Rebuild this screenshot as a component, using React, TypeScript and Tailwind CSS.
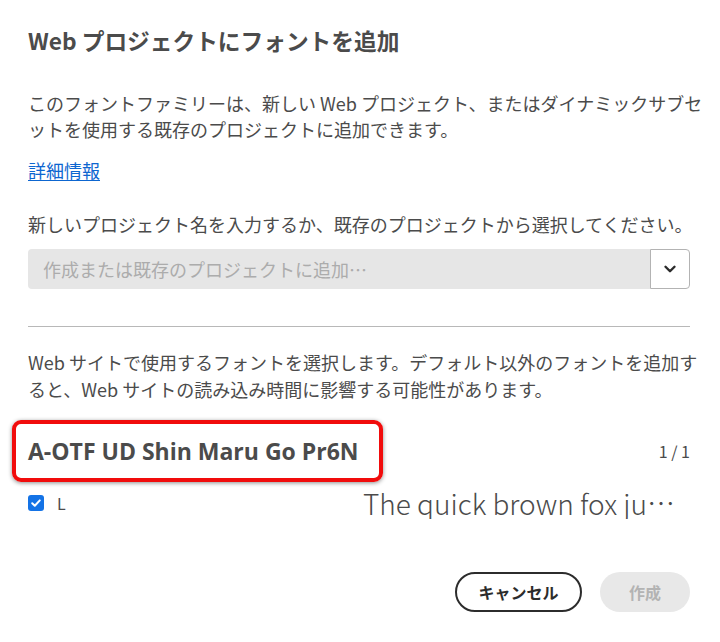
import React from "react";
import { ChevronDown } from "lucide-react";

export default function App() {
  const font = { fontFamily: '"Noto Sans CJK JP", "Noto Sans", sans-serif' } as React.CSSProperties;
  return (
    <div
      className="w-[720px] h-[642px] bg-white pl-[28px] pr-[30px] text-[#4b4b4b] font-['Noto_Sans_CJK_JP','Noto_Sans',sans-serif]"
      style={font}
    >
      <h1 className="pt-[25px] text-[22.7px] font-bold leading-[32px] text-[#4b4b4b] whitespace-nowrap">
        Web プロジェクトにフォントを追加
      </h1>
      <p className="mt-[33px] text-[18px] leading-[26px] whitespace-nowrap">
        このフォントファミリーは、新しい Web プロジェクト、またはダイナミックサブセ
        <br />
        ットを使用する既存のプロジェクトに追加できます。
      </p>
      <div className="mt-[15px] text-[18px] leading-[26px]">
        <a className="text-[#0d66d0] underline underline-offset-2">詳細情報</a>
      </div>
      <p className="mt-[28px] text-[18px] leading-[26px] whitespace-nowrap">
        新しいプロジェクト名を入力するか、既存のプロジェクトから選択してください。
      </p>
      <div className="mt-[12px] flex h-[40px]">
        <div className="flex-1 flex items-center bg-[#e6e6e6] rounded-l-[4px] pl-[15px] text-[18px] text-[#acacac]">
          作成または既存のプロジェクトに追加…
        </div>
        <div className="w-[40px] flex items-center justify-center bg-white border border-[#b3b3b3] rounded-r-[4px]">
          <ChevronDown size={18} strokeWidth={3.2} color="#2c2c2c" />
        </div>
      </div>
      <div className="mt-[37px] h-px bg-[#b8b8b8]" />
      <p className="mt-[22px] text-[18px] leading-[27px] whitespace-nowrap">
        Web サイトで使用するフォントを選択します。デフォルト以外のフォントを追加す
        <br />
        ると、Web サイトの読み込み時間に影響する可能性があります。
      </p>
      <div className="relative mt-[32px] flex items-center justify-between h-[32px]">
        <div
          className="text-[23px] font-bold leading-[32px] text-[#4b4b4b] whitespace-nowrap"
          style={{ fontFamily: '"Open Sans", sans-serif', letterSpacing: "0px" }}
        >
          A-OTF UD Shin Maru Go Pr6N
        </div>
        <div className="text-[16px] text-[#4b4b4b]">1 / 1</div>
        <div className="absolute left-[-16px] top-[-15px] w-[371px] h-[62px] border-[4px] border-[#f10c0c] rounded-[9px] shadow-[0_1px_4px_rgba(0,0,0,0.45)]" />
      </div>
      <div className="mt-[20px] flex items-center h-[32px]">
        <div className="w-[335px] flex items-center">
          <div className="w-[16px] h-[16px] rounded-[3px] bg-[#1473e6] flex items-center justify-center">
            <svg width="12" height="12" viewBox="0 0 12 12">
              <path d="M2.2 6.2 L4.8 8.8 L9.8 3.4" fill="none" stroke="white" strokeWidth="2" strokeLinecap="round" strokeLinejoin="round" />
            </svg>
          </div>
          <span className="ml-[13px] text-[16px]">L</span>
        </div>
        <div className="w-[312px] truncate text-[28px] font-light leading-[32px] text-[#4b4b4b]">
          The quick brown fox jumps over the lazy dog
        </div>
      </div>
      <div className="mt-[53px] flex justify-end gap-[18px]">
        <button className="h-[40px] w-[127px] rounded-full border-2 border-[#2c2c2c] text-[16px] font-bold text-[#2c2c2c]">
          キャンセル
        </button>
        <button className="h-[40px] w-[90px] rounded-full bg-[#e8e8e8] text-[16px] font-bold text-[#b3b3b3]">
          作成
        </button>
      </div>
    </div>
  );
}
